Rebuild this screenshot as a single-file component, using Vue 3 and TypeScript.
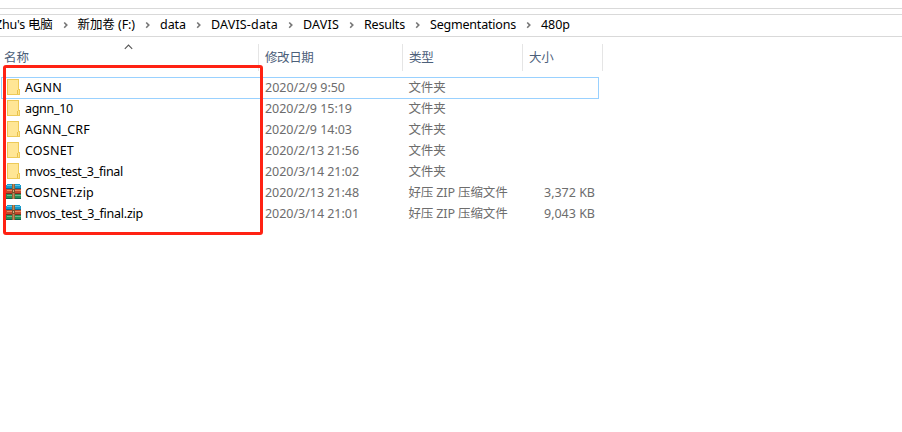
<script setup lang="ts">
import type { Directive } from 'vue'

interface Label {
  text: string
  width: number
}

interface Entry {
  kind: 'folder' | 'zip'
  name: Label
  date: Label
  type: Label
  size?: Label
}

const label = (text: string, width: number): Label => ({ text, width })

const crumbs: Label[] = [
  label("Zhu's 电脑", 57.5),
  label('新加卷 (F:)', 57.5),
  label('data', 26),
  label('DAVIS-data', 67),
  label('DAVIS', 36),
  label('Results', 41),
  label('Segmentations', 86),
  label('480p', 29),
]

const folder = label('文件夹', 37)
const archive = label('好压 ZIP 压缩文件', 99)

const entries: Entry[] = [
  { kind: 'folder', name: label('AGNN', 37), date: label('2020/2/9 9:50', 80), type: folder },
  { kind: 'folder', name: label('agnn_10', 48), date: label('2020/2/9 15:19', 87), type: folder },
  { kind: 'folder', name: label('AGNN_CRF', 65), date: label('2020/2/9 14:03', 87), type: folder },
  { kind: 'folder', name: label('COSNET', 49), date: label('2020/2/13 21:56', 94), type: folder },
  { kind: 'folder', name: label('mvos_test_3_final', 98), date: label('2020/3/14 21:02', 94), type: folder },
  { kind: 'zip', name: label('COSNET.zip', 69), date: label('2020/2/13 21:48', 94), type: archive, size: label('3,372 KB', 51) },
  { kind: 'zip', name: label('mvos_test_3_final.zip', 118), date: label('2020/3/14 21:01', 94), type: archive, size: label('9,043 KB', 51) },
]

const vFit: Directive<HTMLElement, number> = {
  mounted(el, { value }) {
    const natural = el.getBoundingClientRect().width
    const count = (el.textContent ?? '').length
    el.style.letterSpacing = `${(value - natural) / count}px`
  },
}
</script>

<template>
  <main class="explorer">
    <div class="ribbon-edge"></div>
    <nav class="address">
      <template v-for="(crumb, i) in crumbs" :key="crumb.text">
        <svg v-if="i > 0" class="chevron" width="25" height="9" viewBox="0 0 25 9">
          <path d="M11.2 2.5 L13.8 5.1 L11.2 7.7" fill="none" stroke="#777" stroke-width="1.6" />
        </svg>
        <span v-fit="crumb.width" class="label">{{ crumb.text }}</span>
      </template>
    </nav>

    <section class="listing">
      <header class="columns">
        <div class="head head-name">
          <span v-fit="25" class="label">名称</span>
          <svg class="sort" width="9" height="6" viewBox="0 0 9 6">
            <path d="M0.8 4.8 L4.5 1.1 L8.2 4.8" fill="none" stroke="#555" stroke-width="1.1" />
          </svg>
        </div>
        <div class="head"><span v-fit="48.5" class="label">修改日期</span></div>
        <div class="head"><span v-fit="24.5" class="label">类型</span></div>
        <div class="head"><span v-fit="24.5" class="label">大小</span></div>
      </header>

      <div class="rows">
        <div v-for="(entry, i) in entries" :key="entry.name.text" class="row" :class="{ focused: i === 0 }">
          <div class="name">
            <svg v-if="entry.kind === 'folder'" class="icon" width="16" height="16" viewBox="0 0 16 16">
              <path d="M1 0 H13 V10 H14 V16 H1 Z" fill="#edca58" />
              <path d="M2 1 H12 V15 H2 Z" fill="#ffe695" />
              <path d="M12 11 H13 V15 H12 Z" fill="#ffe48c" />
              <path d="M11 11 H12 V15 H11 Z" fill="#e9c14c" />
            </svg>
            <svg v-else class="icon" width="16" height="16" viewBox="0 0 16 16">
              <path d="M1 0 H14 V1 H15 V5 H0 V1 H1 Z" fill="#189bcb" />
              <path d="M1 1 H14 V2 H1 Z" fill="#5fc3e3" />
              <path d="M0 4 H15 V5 H0 Z" fill="#14678b" />
              <path d="M0 5 H15 V10 H0 Z" fill="#c44b2c" />
              <path d="M1 6 H15 V7 H1 Z" fill="#e78c62" />
              <path d="M0 9 H15 V10 H0 Z" fill="#822d20" />
              <path d="M0 10 H15 V15 H0 Z" fill="#268f55" />
              <path d="M1 11 H15 V12 H1 Z" fill="#72b58a" />
              <path d="M0 14 H15 V15 H0 Z" fill="#155e4b" />
              <path d="M6 0 H9 V15 H6 Z" fill="#946338" />
              <path d="M7 0 H8 V15 H7 Z" fill="#b98d5b" />
              <path d="M6 5 H9 V9 H6 Z" fill="#79502c" />
              <path d="M7 6 H8 V8 H7 Z" fill="#d6b080" />
            </svg>
            <span v-fit="entry.name.width" class="label">{{ entry.name.text }}</span>
          </div>
          <div class="cell"><span v-fit="entry.date.width" class="label">{{ entry.date.text }}</span></div>
          <div class="cell type"><span v-fit="entry.type.width" class="label">{{ entry.type.text }}</span></div>
          <div class="cell size">
            <span v-if="entry.size" v-fit="entry.size.width" class="label">{{ entry.size.text }}</span>
          </div>
        </div>
      </div>
      <div class="highlight"></div>
    </section>
  </main>
</template>

<style>
body {
  margin: 0;
  background: #fff;
}
</style>

<style scoped>
.explorer {
  width: 902px;
  height: 432px;
  overflow: hidden;
  background: #fff;
  color: #000;
  font: 12.5px/20px "Noto Sans", "Noto Sans CJK SC", sans-serif;
}

.label {
  display: inline-block;
  flex: none;
  white-space: pre;
}

.ribbon-edge {
  height: 8px;
  border-bottom: 1px solid #d9d9d9;
}

.address {
  display: flex;
  align-items: center;
  box-sizing: border-box;
  height: 23px;
  margin-top: 5px;
  padding-bottom: 2px;
  border-top: 1px solid #d9d9d9;
  border-bottom: 1px solid #d9d9d9;
}

.address .label:first-child {
  margin-left: -5px;
}

.chevron {
  flex: none;
}

.listing {
  position: relative;
  padding-top: 7px;
}

.columns,
.row {
  display: grid;
  grid-template-columns: 259px 144px 120px 80px;
}

.columns {
  width: 603px;
  height: 27px;
  color: #4c607a;
}

.head {
  box-sizing: border-box;
  padding: 4px 0 0 6px;
  border-right: 1px solid #e5e5e5;
}

.head-name {
  position: relative;
  padding-left: 4px;
}

.sort {
  position: absolute;
  left: 124px;
  top: 0;
}

.rows {
  width: 598px;
  margin: 6px 0 0 1px;
}

.row {
  box-sizing: border-box;
  grid-template-columns: 258px 144px 120px 76px;
  height: 21px;
  align-items: center;
}

.row.focused {
  height: 22px;
  margin-bottom: -1px;
  padding-bottom: 1px;
  box-shadow: inset 0 0 0 1px #99d1ff;
}

.name {
  display: flex;
  align-items: center;
  gap: 3px;
  padding-left: 5px;
}

.icon {
  flex: none;
  margin-bottom: 1px;
  shape-rendering: crispEdges;
}

.cell {
  padding-left: 6px;
  color: #6d6d6d;
}

.type {
  padding-left: 5.5px;
}

.size {
  display: flex;
  justify-content: flex-end;
  padding: 0 4px 0 0;
}

.highlight {
  position: absolute;
  left: 3px;
  top: 28px;
  box-sizing: border-box;
  width: 260px;
  height: 170px;
  border: 3px solid #ff2213;
  border-radius: 3px;
}
</style>
